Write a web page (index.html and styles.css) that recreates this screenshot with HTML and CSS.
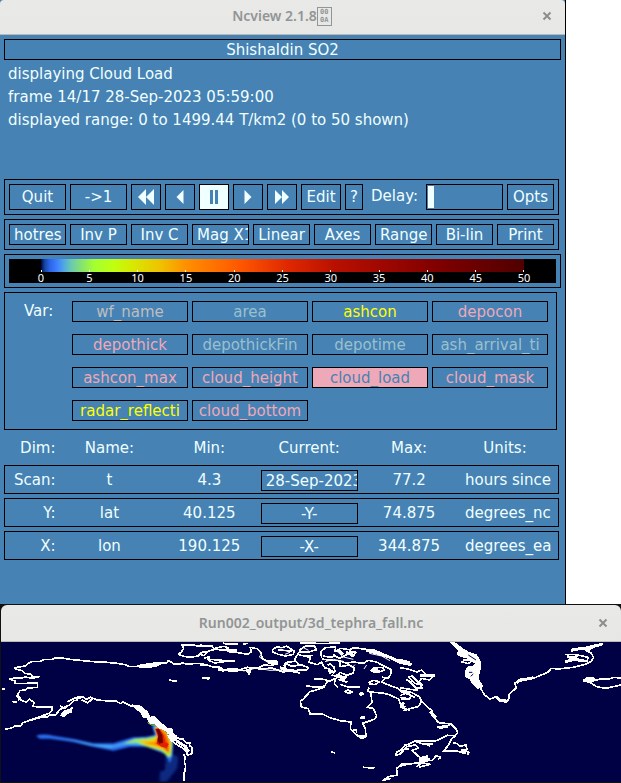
FILE: index.html
```html
<!DOCTYPE html>
<html lang="en">
<head>
<meta charset="utf-8">
<title>Ncview</title>
<link rel="stylesheet" href="styles.css">
</head>
<body>
<main class="desktop">
<section class="window control">
  <header class="titlebar">
    <h1>Ncview 2.1.8<span class="ctrl-char"><span>00</span><span>0A</span></span></h1>
    <button class="close" aria-label="Close"><svg viewBox="0 0 10 10"><path d="M1.500 1.500 8.500 8.500M8.500 1.500 1.500 8.500"/></svg></button>
  </header>
  <div class="panel">
    <p class="dataset frame">Shishaldin SO2</p>
    <div class="status">
      <p>displaying Cloud Load</p>
      <p>frame 14/17 28-Sep-2023 05:59:00</p>
      <p>displayed range: 0 to 1499.44 T/km2 (0 to 50 shown)</p>
    </div>
    <div class="frame bar transport">
      <button class="wide">Quit</button>
      <button class="wide">-&gt;1</button>
      <button class="step" aria-label="Rewind"><svg viewBox="0 0 18 16"><path d="M9 0V16L1 8ZM17 0V16L9 8Z"/></svg></button>
      <button class="step" aria-label="Back"><svg viewBox="0 0 18 16"><path d="M12.500 1V15L5.500 8Z"/></svg></button>
      <button class="step on" aria-label="Pause"><svg viewBox="0 0 18 16"><path d="M5 1H8V15H5ZM10 1H13V15H10Z"/></svg></button>
      <button class="step" aria-label="Forward"><svg viewBox="0 0 18 16"><path d="M5.500 1V15L12.500 8Z"/></svg></button>
      <button class="step" aria-label="Fast forward"><svg viewBox="0 0 18 16"><path d="M2 1V15L9 8ZM9 1V15L16 8Z"/></svg></button>
      <button class="edit">Edit</button>
      <button class="help">?</button>
      <label class="delay-label" for="delay">Delay:</label>
      <input class="delay" id="delay" type="range" min="0" max="100" value="0">
      <button class="opts">Opts</button>
    </div>
    <div class="frame bar options">
      <button>hotres</button><button>Inv P</button><button>Inv C</button><button>Mag X1</button><button>Linear</button><button>Axes</button><button>Range</button><button>Bi-lin</button><button>Print</button>
    </div>
    <div class="frame colorbar">
      <div class="scale">
        <div class="ramp"></div>
        <div class="ticks"><span>0</span><span>5</span><span>10</span><span>15</span><span>20</span><span>25</span><span>30</span><span>35</span><span>40</span><span>45</span><span>50</span></div>
      </div>
    </div>
    <div class="frame vars">
      <span class="vars-label">Var:</span>
      <div class="var-grid">
        <button class="grey">wf_name</button><button class="pale">area</button><button class="yellow">ashcon</button><button class="pink">depocon</button>
        <button class="pink">depothick</button><button class="pale">depothickFin</button><button class="pale">depotime</button><button class="pale">ash_arrival_ti</button>
        <button class="pink">ashcon_max</button><button class="pink">cloud_height</button><button class="pink selected">cloud_load</button><button class="pink">cloud_mask</button>
        <button class="yellow">radar_reflecti</button><button class="pink">cloud_bottom</button>
      </div>
    </div>
    <table class="dims">
      <thead><tr><th class="dim">Dim:</th><th>Name:</th><th>Min:</th><th>Current:</th><th>Max:</th><th class="units">Units:</th></tr></thead>
      <tbody>
        <tr><th class="dim" scope="row">Scan:</th><td>t</td><td>4.3</td><td><button>28-Sep-2023</button></td><td>77.2</td><td class="units">hours since</td></tr>
        <tr><th class="dim" scope="row">Y:</th><td>lat</td><td>40.125</td><td><button>-Y-</button></td><td>74.875</td><td class="units">degrees_nc</td></tr>
        <tr><th class="dim" scope="row">X:</th><td>lon</td><td>190.125</td><td><button>-X-</button></td><td>344.875</td><td class="units">degrees_ea</td></tr>
      </tbody>
    </table>
  </div>
</section>

<section class="window view">
  <header class="titlebar">
    <h2>Run002_output/3d_tephra_fall.nc</h2>
    <button class="close" aria-label="Close"><svg viewBox="0 0 10 10"><path d="M1.500 1.500 8.500 8.500M8.500 1.500 1.500 8.500"/></svg></button>
  </header>
  <svg class="map" viewBox="0 0 620 140" role="img" aria-label="Cloud load map">
    <defs>
      <filter id="soft" x="-20%" y="-50%" width="140%" height="200%"><feGaussianBlur stdDeviation="3"/></filter>
      <filter id="softer" x="-50%" y="-50%" width="200%" height="200%"><feGaussianBlur stdDeviation="5"/></filter>
    </defs>
    <!-- ash cloud -->
    <g transform="translate(-1 -42) scale(.33333)">
      <path filter="url(#softer)" fill="#0a2a80" d="M498 455 535 470 532 505 512 530 500 545 478 545 480 515 495 510Z"/>
      <g filter="url(#soft)">
        <path fill="#2a70f0" d="M108 408Q125 400 160 407L225 418 280 430 340 430 400 412 440 410 465 405 455 375 475 372 500 395 520 425 517 470 510 490 496 462 440 440 390 440 340 452 280 440 220 426 150 416 120 416Z"/>
        <path fill="#50b8e8" d="M190 415 280 434 340 437 395 424 430 413 440 436 380 433 330 443 270 436Z"/>
        <path fill="#a0f040" d="M370 430 405 417 440 415 470 407 462 382 480 375 505 400 517 430 514 467 505 472 485 453 440 440 410 427Z"/>
        <path fill="#ffc000" d="M415 424 460 420 474 405 467 382 482 378 503 400 513 430 509 462 490 449 445 436Z"/>
        <path fill="#f05000" d="M430 430 468 428 473 410 467 386 482 386 499 405 507 430 506 460 488 442 465 433Z"/>
      </g>
      <path fill="#e02000" d="M465 386 478 385 491 406 496 427 506 432 500 444 484 440 470 431 474 410Z"/>
      <path fill="#700000" d="M468 387 477 388 487 406 489 428 478 431 473 422 475 404Z"/>
      <path fill="none" stroke="#a0f040" stroke-width="3" d="M443 368 455 375 469 375"/>
    </g>
    <!-- Alaska and the Pacific coast -->
    <g class="coast" transform="translate(-1 -42) scale(.33333)">
      <path d="M120 229 98 230 92 223 75 220 66 212 47 207 44 203 77 198 84 190 95 185 122 184 130 179 158 178 163 174 184 174 210 178 249 182 280 185 320 187 350 190 375 194 388 199 410 200 417 196 430 197 444 191 452 195 470 191 488 188 500 189 505 182 512 185 522 193 540 192 546 188 560 192 600 190 620 195 630 197"/>
      <path d="M120 229 98 235 75 231 60 235 45 233 28 238 47 243 44 250 70 251 95 249 112 248 113 262 83 264 75 270 60 272 50 289 65 302 80 306 88 298 102 307 99 319 125 322 157 320 155 333 148 340 125 348 100 357 69 368 63 377 45 378 35 384 15 388"/>
      <path d="M95 360 125 351 140 352 150 345 166 345 180 329 197 320 209 315 221 302 233 302 230 292 250 290 258 298 272 292 292 300 315 302 350 304 361 311 370 306 388 316 400 320"/>
      <path d="M50 285 61 293 55 302M35 304 51 307M202 306 226 294 240 295 251 288M245 300 263 309 280 294M180 318 194 326 200 319M5 266 14 268M508 240 520 243 530 241 528 247M607 233 630 235"/>
      <path class="land" d="M183 346 193 333 207 330 216 323 213 336 200 340 193 349ZM397 316 418 317 440 335 450 353 463 350 485 372 501 385 515 387 518 398 505 400 494 386 480 384 469 371 451 369 440 351 430 350 424 337 410 327ZM412 199 424 194 440 196 465 188 485 188 475 196 450 201 425 201Z"/>
      <path class="land" d="M505 407 521 402 529 409 525 421 512 418Z"/>
      <path d="M512 420 529 433 551 446 560 455 562 465 575 462 576 443 568 436 570 429 559 429 548 416 540 418 534 412 526 417 539 429 557 438 565 457M551 463 555 471 553 489 557 495 555 513 551 520 553 543"/>
      <path class="thick" d="M418 320 434 340M455 356 480 381 504 392M530 423 557 440 566 455"/>
      <path d="M630 137 595 138 578 135 545 135 551 145 543 157 535 163 552 169 568 172 594 168 605 157 630 153M612 175 630 170"/>
    </g>
    <!-- Canadian Arctic and Hudson Bay -->
    <g class="coast" transform="translate(199 -42) scale(.33333)">
      <path d="M0 134 12 138 35 137 42 146 70 139 85 143 78 151 45 148 24 154 11 167 0 163M0 195 25 196 40 201 57 201 71 209 100 206 120 209 143 202 154 204 147 222 138 211 90 213 60 209M68 129 85 133 115 131M130 132 143 130M171 146 150 142 155 154 145 163 120 159 102 155 88 156 80 149 110 151M171 146 183 158 187 176 205 184 230 184 232 192 210 197 195 194 174 204 151 204"/>
      <path d="M20 177 52 180 104 184 71 185 44 189 24 180M8 233 29 233 22 238M215 152 230 140 245 143 260 139 283 153 280 163 258 168 235 163 216 155M235 150 277 153M298 151 318 137 343 138 350 149 325 156 298 157 290 168 284 180 295 193 325 202 320 210 290 211M300 128 370 131 420 128"/>
      <path d="M154 204 185 207 215 204 250 216 280 211 300 221M250 199 260 187 284 184M254 211 256 190 275 199 310 193M322 170 331 175 327 187 352 194 364 186 375 204 388 207 390 219 405 215 402 201 390 192 383 195M297 165 322 169 340 166"/>
      <path d="M365 175 362 156 376 143 407 141 405 155 422 145 447 149 462 143 490 147 525 151 545 160 565 168 585 177 609 183 630 185M400 164 418 175 447 161 458 169 469 157 448 153M365 177 383 180 414 182 440 189 460 186 490 190 505 181 530 186 550 197 573 209 572 224 563 236 545 231M514 213 530 218 553 211 548 202 520 204 513 213M368 167 388 172 407 168M420 187 420 200 448 195 463 203 460 219 440 226 420 217 410 234 380 247 372 262 348 270 330 275 311 296 301 304 304 321 325 326 331 343 365 341 390 353 420 362 453 366 451 387 465 401 485 415 498 410 496 387 488 370 523 358 530 348 520 325 501 322 516 308 513 279 503 272 508 263"/>
      <path d="M343 237 370 238 390 243M317 257 350 262 375 258M405 238 403 252 414 263M395 225 422 234 440 230 430 240 415 238 442 247M420 253 447 262 480 262M435 275 445 270 458 277 445 280ZM478 282 483 277 489 282 483 287ZM481 353 494 349 492 355ZM452 392 470 390 470 400M470 409 495 409M394 456 406 459M489 502 523 503 505 506M505 248 520 241 539 245 525 254 508 251M558 232 545 245 558 252 595 266 610 279 630 280M510 276 548 279 570 285 596 297 605 322 630 331M602 297 625 299M630 432 615 435 606 447 590 457 587 466 604 461 612 448 628 446M630 491 604 493 589 506 593 525 565 530 550 541 573 535"/>
      <path class="thick" d="M205 187 230 192M240 203 262 211 295 215M55 208 74 211M137 209 153 216M415 151 430 163M438 158 458 162M498 151 536 160 570 172 603 188 630 193M385 210 404 218M408 225 435 235M520 210 540 215M610 307 605 324"/>
      <path class="thin" d="M130 213 170 204 210 211 250 210M175 150 184 162 178 171 205 188 228 183M242 147 270 157 255 163M308 142 326 151M410 153 430 171 460 178M455 204 465 194M375 185 400 178 430 184M492 207 500 195M508 160 545 168 570 182"/>
    </g>
    <!-- Labrador, Greenland and Iceland -->
    <g class="coast" transform="translate(399 -42) scale(.33333)">
      <path class="land" d="M153 128 166 130 188 147 205 158 228 165 240 184 240 205 233 235 247 259 233 264 219 251 211 237 198 229 196 214 205 202 220 200 228 190 216 181 205 174 190 170 173 164 177 151Z"/>
      <path class="hole" d="M190 180 215 186M205 165 228 180M207 217 217 217M212 229 220 222"/>
      <path d="M184 185 204 191 215 184 205 179 188 181M240 263 255 286 270 297 288 290 303 302 318 307 326 298 328 283 348 264 345 249 360 238 386 236 405 233 445 216 454 205 475 207 520 202 556 193 574 184 581 173 573 158 559 153 577 143 610 131"/>
      <path class="thick" d="M290 293 304 303 319 301M350 249 356 242 400 233M500 170 532 174M512 151 545 145 570 150M495 185 525 178 550 183M550 146 605 133M225 246 238 260"/>
      <path d="M494 164 520 163 548 168 565 172 561 184 540 181M548 242 565 232 582 235 580 243 565 246 550 242M582 242 600 237 626 238 640 232 663 234M570 247 590 260 617 265 663 255"/>
      <path class="thick" d="M554 241 580 237M0 180 35 195M60 226 102 227"/>
      <path d="M0 203 25 207 50 216 65 210 76 223 104 226 88 240 65 235 58 244 66 255 45 250 25 231 36 228 58 250 67 264 48 263 20 239 34 247 51 270 30 268 0 263M0 272 30 275 58 290 65 303 55 320 30 326 10 332M0 287 16 280 32 286M0 292 28 297 36 286 44 293M62 301 81 320 98 333 97 347 116 368 153 372 167 386 173 397 166 407 143 406 110 422 45 423 13 438 0 453M112 382 142 379 150 372"/>
      <path class="thick" d="M0 315 16 323M90 335 108 352M116 383 145 378"/>
      <path d="M167 406 155 417 145 436 130 454 170 453 194 460 201 449 198 434 182 439 169 430 159 429M190 450 207 457 203 465M0 498 28 492 60 488 73 481 97 482 108 467 122 472 113 479M0 462 20 440 46 435 55 444 36 451 52 466 61 474 57 489 85 483M49 500 66 489 90 493 58 501M45 424 70 432 100 431M72 430 90 438"/>
      <path class="thick" d="M63 475 84 470M60 480 90 480M182 451 201 452"/>
    </g>
  </svg>
</section>
</main>
</body>
</html>
```
FILE: styles.css
```css
* { box-sizing: border-box; }
body { margin: 0; background: #fff; color: #f0ffff; font: 15px/21px "DejaVu Sans", sans-serif; }
h1, h2, p { margin: 0; font-weight: inherit; }
button { font: inherit; color: inherit; background: none; border: 1px solid #000; border-radius: 0; padding: 2px 4px 0; height: 21px; line-height: 17px; min-width: 0; overflow: hidden; white-space: nowrap; }

.desktop { min-height: 100vh; }
.control { margin-right: 55px; border-right: 1px solid #000; background: #4682b4; }
.titlebar { display: flex; align-items: center; height: 35px; padding: 0 13px 2px 22px; background: linear-gradient(#e9e9e7, #e7e7e5); border-bottom: 1px solid #bdbab5; color: #929595; font: bold 14px/20px "Noto Sans", sans-serif; }
.titlebar h1, .titlebar h2 { flex: 1; display: flex; justify-content: center; align-items: center; font-size: 14px; font-weight: 600; }
.control .titlebar { border-radius: 4px 4px 0 0; }
.ctrl-char { display: flex; flex-direction: column; justify-content: space-around; width: 15px; height: 19px; border: 1px solid #929595; font: bold 7px/8px "DejaVu Sans Mono", monospace; text-align: center; }
.titlebar .close { display: flex; align-items: center; width: 10px; height: 20px; padding: 0; border: 0; }
.close svg { width: 10px; height: 10px; fill: none; stroke: #8b8e8f; stroke-width: 2; }

.panel { padding: 4px 4px 40px; }
.frame { border: 1px solid #000; }
.dataset { height: 21px; line-height: 20px; text-align: center; }
.status { height: 119px; padding: 3px 4px; line-height: 23px; white-space: nowrap; }
.bar { display: flex; gap: 4px; margin: 0 2px 4px 0; padding: 4px; }
.transport button, .delay { height: 26px; line-height: 24px; }
.transport button { padding: 0; }
.transport .wide { flex: 57 1 57px; }
.transport .step { display: flex; align-items: center; justify-content: center; flex: 30 1 30px; }
.step svg { width: 18px; height: 16px; fill: #f0ffff; flex: none; }
.step.on { background: #f0ffff; }
.step.on svg { fill: #4682b4; }
.transport .edit { flex: 40 1 40px; }
.transport .help { flex: 18 1 18px; }
.transport .opts { flex: 47 1 47px; }
.delay-label { flex: 55 1 55px; padding-left: 4px; line-height: 24px; white-space: nowrap; }
.delay { appearance: none; flex: 77 1 77px; min-width: 0; margin: 0; padding: 1px; border: 1px solid #000; background: none; }
.delay::-webkit-slider-thumb { appearance: none; width: 6px; height: 22px; background: #f0ffff; }
.options button { flex: 1 1 0; }

.colorbar { margin-bottom: 4px; padding: 4px; }
.scale { height: 24px; padding: 0 32px; background: #000; }
.ramp { height: 13px; background: linear-gradient(90deg, #000044, #001c60 2%, #17449c 7%, #2a62e8 16%, #3f83ff 31%, #52aae0 44%, #6cccac 58%, #86e270 76%, #a4ff30) 0 0 / 11% 100% no-repeat, linear-gradient(90deg, #a4ff30 11%, #c0ff10 15%, #d8e800 19%, #f0c000 25%, #ff9000 30%, #ff8000 33%, #ff5800 41%, #e02800 51%, #b81000 61%, #a00800 70%, #800000 82%, #500000); }
.ticks { display: flex; justify-content: space-between; font: 11px/11px "Noto Sans", sans-serif; color: #fff; margin-top: -2px; }
.ticks span { display: flex; flex-direction: column; align-items: center; width: 0; }
.ticks span::before { content: ""; flex: none; width: 1px; height: 2px; background: #fff; }

.vars { display: flex; margin-right: 4px; padding: 8px 8px 8px 19px; }
.vars-label { width: 48px; line-height: 21px; }
.var-grid { flex: 1; display: grid; grid-template-columns: repeat(4, minmax(0, 1fr)); gap: 12px 4px; }
.grey { color: #bebebe; }
.pale { color: #9ac0cd; }
.yellow { color: #ff0; }
.pink { color: #eea9b8; }
.var-grid .selected { color: #4682b4; background: #eea9b8; }

.dims { width: calc(100% - 2px); table-layout: fixed; border-spacing: 0 4px; border-collapse: separate; }
.dims th, .dims td { width: 18%; height: 29px; padding: 2px 0 0; font-weight: normal; text-align: center; white-space: nowrap; overflow: hidden; }
.dims thead th { height: 27px; }
.dims tbody th, .dims tbody td { border: solid #000; border-width: 1px 0; }
.dims tbody th { border-left-width: 1px; }
.dims tbody td:last-child { border-right-width: 1px; }
.dims .dim { width: 10%; text-align: right; padding-right: 4px; }
.dims thead .units { padding-right: 8px; }
.dims tbody .units { text-align: left; padding-left: 6px; }
.dims button { display: block; width: 97px; max-width: 100%; margin: 0 auto; }

.view { padding: 1px 0 1px 1px; background: #111; }
.view .titlebar { height: 37px; padding-left: 23px; padding-bottom: 0; border-radius: 6px 6px 0 0; }
.map { display: block; width: 100%; height: auto; background: #000044; }
.coast { fill: none; stroke: #fff; stroke-width: 5; shape-rendering: crispEdges; stroke-linejoin: round; }
.coast .land { fill: #fff; }
.coast .thick { stroke-width: 9; }
.coast .thin { stroke-width: 3; }
.coast .hole { stroke: #000044; stroke-width: 3; }
```
